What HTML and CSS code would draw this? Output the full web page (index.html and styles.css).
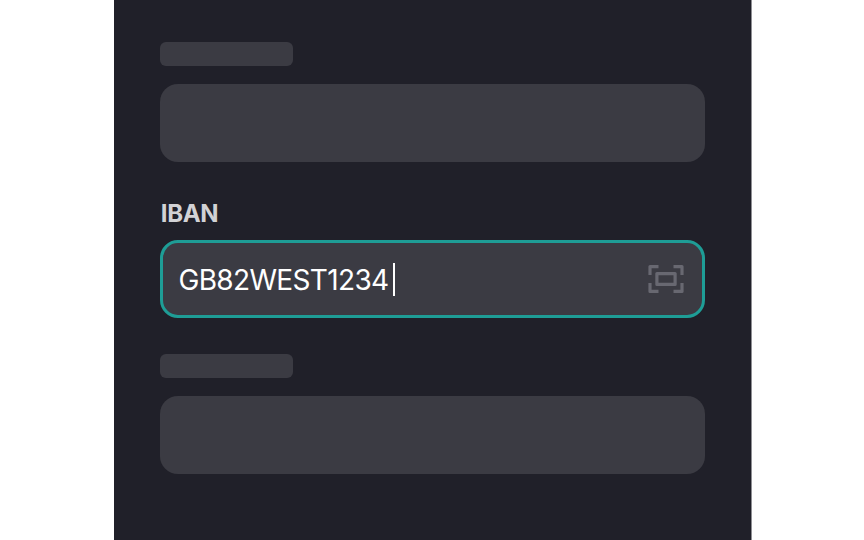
FILE: index.html
```html
<!DOCTYPE html>
<html lang="en">
<head>
    <meta charset="UTF-8">
    <meta name="viewport" content="width=device-width, initial-scale=1.0">
    <title>IBAN</title>
    <link rel="stylesheet" href="styles.css">
</head>
<body>
    <div class="panel">
        <div class="group">
            <div class="label"><span class="label-placeholder"></span></div>
            <div class="field"></div>
        </div>

        <div class="group">
            <div class="label label-text">IBAN</div>
            <div class="field active">
                <span class="value">GB82WEST1234</span>
                <span class="caret"></span>
                <svg class="scan-icon" width="36" height="28" viewBox="0 0 36 28" fill="none" stroke="#686871" stroke-width="3.2" stroke-linejoin="round">
                    <path d="M2 10V1.6H10.5M25.5 1.6H34V10M34 18V26.4H25.5M10.5 26.4H2V18"/>
                    <rect x="8.9" y="8.6" width="18.2" height="10.8"/>
                </svg>
            </div>
        </div>

        <div class="group">
            <div class="label"><span class="label-placeholder"></span></div>
            <div class="field"></div>
        </div>
    </div>
</body>
</html>
```

FILE: styles.css
```css
body {
    margin: 0;
    background-color: #fff;
    font-family: Inter, sans-serif;
    overflow: hidden;
}

.panel {
    box-sizing: border-box;
    width: 638px;
    height: 540px;
    margin-left: 114px;
    padding: 42px 46px 0 46.4px;
    border-right: 1px solid #8f8f94;
    background-color: #202029;
}

.group {
    margin-bottom: 36px;
}

.label {
    box-sizing: border-box;
    display: flex;
    align-items: center;
    height: 24px;
    margin-bottom: 18px;
    color: #d2d2d5;
    font-size: 24px;
    font-weight: 700;
    line-height: 24px;
    letter-spacing: -0.3px;
}

.label-text {
    padding-top: 8px;
    padding-left: 0.3px;
}

.label-placeholder {
    width: 132.4px;
    height: 24px;
    border-radius: 6px;
    background-color: #3b3b43;
}

.field {
    box-sizing: border-box;
    display: flex;
    align-items: center;
    height: 78px;
    border-radius: 18px;
    background-color: #3b3b43;
}

.field.active {
    padding: 0 18px 0 15px;
    border: 3px solid #1e9d96;
}

.value {
    padding-top: 2px;
    color: #fff;
    font-size: 28px;
    font-weight: 370;
    line-height: 36px;
    letter-spacing: -0.65px;
}

.caret {
    width: 2px;
    height: 33px;
    margin-left: 4px;
    background-color: #fff;
}

.scan-icon {
    margin-left: auto;
}
```
